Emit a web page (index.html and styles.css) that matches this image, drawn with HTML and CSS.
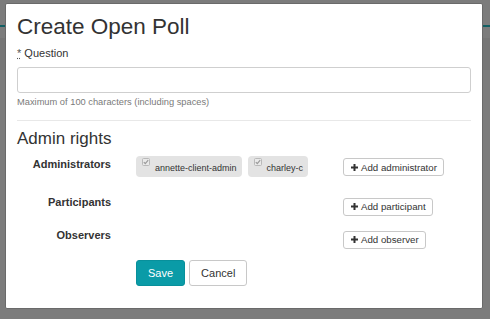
FILE: index.html
```html
<!DOCTYPE html>
<html lang="en">
<head>
    <meta charset="UTF-8">
    <meta name="viewport" content="width=device-width, initial-scale=1.0">
    <title>Create Open Poll</title>
    <link rel="stylesheet" href="styles.css">
</head>
<body>
    <div class="modal">
        <h1 class="modal-title">Create Open Poll</h1>
        <label class="field-label" for="question"><abbr title="required">*</abbr> Question</label>
        <input type="text" id="question" class="text-input" autocomplete="off">
        <p class="help">Maximum of 100 characters (including spaces)</p>
        <hr class="divider">
        <h2 class="section-title">Admin rights</h2>

        <div class="rights-row first">
            <div class="rights-label">Administrators</div>
            <div class="chips">
                <span class="chip">
                    <svg class="check" width="8" height="8" viewBox="0 0 8 8"><rect x="0.5" y="0.5" width="7" height="7" rx="1" fill="#e9e9e9" stroke="#b9b9b9"/><path d="M1.8 4.2 L3.3 5.7 L6.2 2.2" fill="none" stroke="#9a9a9a" stroke-width="1.2"/></svg>
                    <span class="chip-text">annette-client-admin</span>
                </span>
                <span class="chip">
                    <svg class="check" width="8" height="8" viewBox="0 0 8 8"><rect x="0.5" y="0.5" width="7" height="7" rx="1" fill="#e9e9e9" stroke="#b9b9b9"/><path d="M1.8 4.2 L3.3 5.7 L6.2 2.2" fill="none" stroke="#9a9a9a" stroke-width="1.2"/></svg>
                    <span class="chip-text">charley-c</span>
                </span>
            </div>
            <div><button class="btn-add">
                <svg width="7" height="7" viewBox="0 0 7 7"><path d="M3.5 0 V7 M0 3.5 H7" stroke="#333" stroke-width="2"/></svg>
                Add administrator</button></div>
        </div>

        <div class="rights-row second">
            <div class="rights-label">Participants</div>
            <div class="chips"></div>
            <div><button class="btn-add">
                <svg width="7" height="7" viewBox="0 0 7 7"><path d="M3.5 0 V7 M0 3.5 H7" stroke="#333" stroke-width="2"/></svg>
                Add participant</button></div>
        </div>

        <div class="rights-row third">
            <div class="rights-label">Observers</div>
            <div class="chips"></div>
            <div><button class="btn-add">
                <svg width="7" height="7" viewBox="0 0 7 7"><path d="M3.5 0 V7 M0 3.5 H7" stroke="#333" stroke-width="2"/></svg>
                Add observer</button></div>
        </div>

        <div class="actions">
            <button class="btn btn-primary">Save</button>
            <button class="btn btn-default">Cancel</button>
        </div>
    </div>
</body>
</html>
```

FILE: styles.css
```css
html, body {
    height: 100%;
}
body {
    margin: 0;
    padding: 3px 0 0 5px;
    box-sizing: border-box;
    font-family: "Liberation Sans", Arial, sans-serif;
    color: #333;
    background: linear-gradient(to bottom,
        #7c7c7c 0 25px,
        #125f63 25px 27px,
        #7c7c7c 27px 38px,
        #767676 38px 70px,
        #7c7c7c 70px);
}
.modal {
    width: 478px;
    box-sizing: border-box;
    background: #fff;
    border: 1px solid #6a6a6a;
    border-radius: 2px;
    padding: 10px 11px 22px 11px;
}
.modal-title {
    margin: 0;
    font-size: 22.5px;
    line-height: 26px;
    font-weight: 400;
    color: #333;
}
.field-label {
    display: block;
    margin-top: 6px;
    font-size: 11px;
    line-height: 15px;
}
.field-label abbr {
    text-decoration: underline dotted;
    color: #555;
}
.text-input {
    display: block;
    margin: 6px 0 0 0;
    width: 100%;
    height: 26px;
    box-sizing: border-box;
    border: 1px solid #cfcfcf;
    border-radius: 3px;
    outline: none;
}
.help {
    margin: 3px 0 0 0;
    font-size: 9.3px;
    line-height: 12px;
    color: #7a7a7a;
}
.divider {
    margin: 12px 0 0 0;
    border: none;
    border-top: 1px solid #e8e8e8;
}
.section-title {
    margin: 8px 0 0 0;
    font-size: 17px;
    line-height: 20px;
    font-weight: 400;
}
.rights-row {
    display: grid;
    grid-template-columns: 119px 207px auto;
    align-items: start;
}
.rights-row.first { margin-top: 7px; height: 21px; }
.rights-row.second { margin-top: 19px; height: 18px; }
.rights-row.third { margin-top: 15px; height: 18px; }
.rights-label {
    padding-right: 25px;
    text-align: right;
    font-size: 11px;
    line-height: 13px;
    font-weight: bold;
}
.first .rights-label { margin-top: 2px; }
.first .btn-add { margin-top: 2px; }
.chips {
    display: flex;
    gap: 6px;
}
.chip {
    display: flex;
    align-items: flex-start;
    height: 21px;
    box-sizing: border-box;
    padding: 2px 5px 0 6px;
    background: #e3e3e3;
    border-radius: 4px;
}
.check {
    display: block;
}
.chip-text {
    margin: 5px 0 0 5px;
    font-size: 9px;
    line-height: 11px;
}
.btn-add {
    display: inline-flex;
    align-items: center;
    gap: 3px;
    height: 18px;
    padding: 0 6px 0 7px;
    background: #fff;
    border: 1px solid #c8c8c8;
    border-radius: 3px;
    font-family: inherit;
    font-size: 9.7px;
    color: #333;
    cursor: pointer;
}
.btn-add svg {
    display: block;
}
.actions {
    margin: 13px 0 0 119px;
    display: flex;
    gap: 4px;
}
.btn {
    height: 26px;
    padding: 0 11px;
    border-radius: 3px;
    font-family: inherit;
    font-size: 11px;
    cursor: pointer;
}
.btn-primary {
    background: #0a9ba7;
    border: 1px solid #08909b;
    color: #fff;
}
.btn-default {
    background: #fff;
    border: 1px solid #c8c8c8;
    color: #333;
}
```
